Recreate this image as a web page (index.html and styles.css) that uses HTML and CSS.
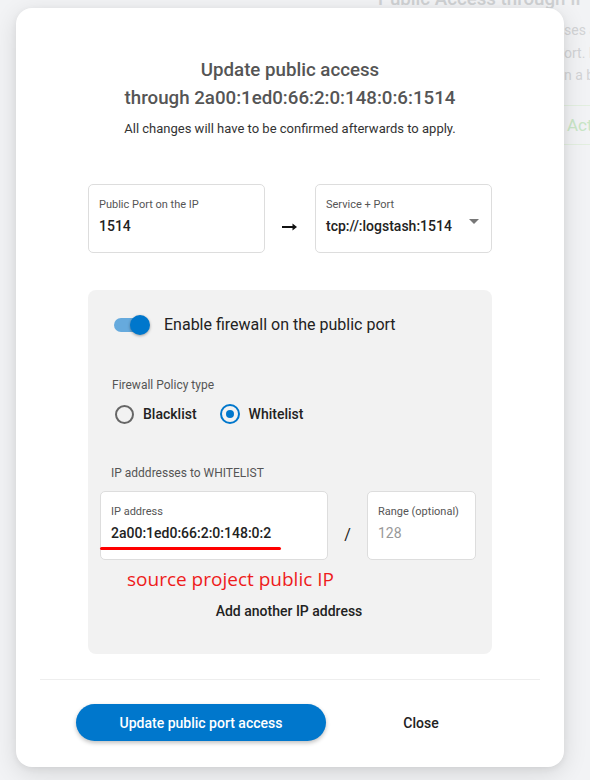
FILE: index.html
```html
<!DOCTYPE html>
<html>
<head>
<meta charset="utf-8">
<link rel="stylesheet" href="styles.css">
</head>
<body>
<div class="page">
  <h2 class="bg-title">Public Access through IP</h2>
  <p class="bg-line"><span class="bg-hidden">Only the IP addres</span>ses are allowed</p>
  <p class="bg-line"><span class="bg-hidden">to the public p</span>ort. Each</p>
  <p class="bg-line"><span class="bg-hidden">running withi</span>n a business</p>
  <div class="bg-box"><span class="bg-hidden-s">x</span>Active</div>
</div>

<div class="modal">
  <div class="modal-body">
    <h1 class="title">Update public access<br>through 2a00:1ed0:66:2:0:148:0:6:1514</h1>
    <p class="subtitle">All changes will have to be confirmed afterwards to apply.</p>

    <div class="port-row">
      <div class="field">
        <div class="field-label">Public Port on the IP</div>
        <div class="field-value">1514</div>
      </div>
      <div class="arrow">
        <svg width="16" height="10" viewBox="0 0 16 10"><path d="M0 5H13" stroke="#111" stroke-width="2"/><path d="M10.5 1.5L15 5L10.5 8.5Z" fill="#111"/></svg>
      </div>
      <div class="field field-select">
        <div class="field-label">Service + Port</div>
        <div class="field-value">tcp://:logstash:1514</div>
        <span class="caret"></span>
      </div>
    </div>

    <div class="panel">
      <div class="toggle-row">
        <span class="toggle"><span class="track"></span><span class="thumb"></span></span>
        <span class="toggle-label">Enable firewall on the public port</span>
      </div>

      <div class="section-label policy-label">Firewall Policy type</div>
      <div class="radio-row">
        <span class="radio"><span class="radio-circle"></span><span class="radio-text">Blacklist</span></span>
        <span class="radio radio-on"><span class="radio-circle"></span><span class="radio-text">Whitelist</span></span>
      </div>

      <div class="section-label ip-label">IP adddresses to WHITELIST</div>
      <div class="ip-row">
        <div class="field ip-field">
          <div class="field-label">IP address</div>
          <div class="field-value">2a00:1ed0:66:2:0:148:0:2</div>
          <span class="annot-line"></span>
        </div>
        <div class="slash">/</div>
        <div class="field range-field">
          <div class="field-label">Range (optional)</div>
          <div class="field-value placeholder">128</div>
        </div>
      </div>
      <div class="annot-text">source project public IP</div>
      <div class="add-ip">Add another IP address</div>
    </div>
  </div>

  <div class="modal-footer">
    <button class="btn-primary">Update public port access</button>
    <button class="btn-text">Close</button>
  </div>
</div>
</body>
</html>
```

FILE: styles.css
```css
* { box-sizing: border-box; }

html, body {
  margin: 0;
  padding: 0;
  width: 590px;
  height: 780px;
  overflow: hidden;
}

body {
  background: #f2f3f5;
  font-family: Roboto, "Liberation Sans", sans-serif;
  position: relative;
}

/* background page (under the modal) */
.page {
  padding-left: 378px;
  color: #d2d4d6;
}
.bg-title {
  margin: -14px 0 0;
  font-size: 18.7px;
  font-weight: 500;
  line-height: 26px;
  white-space: nowrap;
  color: #cfd1d3;
}
.bg-line {
  margin: 0;
  font-size: 14px;
  line-height: 22.5px;
  white-space: nowrap;
}
.bg-line:first-of-type { margin-top: 7px; }
.bg-hidden {
  display: inline-block;
  width: 186px;
  overflow: hidden;
  vertical-align: top;
  color: transparent;
}
.bg-box {
  margin-top: 18px;
  width: 300px;
  height: 40px;
  border: 1px solid #e3efe0;
  border-radius: 4px;
  display: flex;
  align-items: center;
  font-size: 17px;
  color: #c9e6c6;
  white-space: nowrap;
}
.bg-hidden-s {
  display: inline-block;
  width: 188px;
  color: transparent;
}

/* modal */
.modal {
  position: absolute;
  top: 8px;
  left: 16px;
  width: 548px;
  height: 759px;
  background: #fff;
  border-radius: 16px;
  box-shadow: 0 6px 24px rgba(0, 0, 0, 0.12), 0 2px 6px rgba(0, 0, 0, 0.06);
  display: flex;
  flex-direction: column;
}

.modal-body {
  padding: 48px 72px 0;
}

.title {
  margin: 0;
  text-align: center;
  font-size: 18.7px;
  font-weight: 500;
  line-height: 28px;
  color: #555;
}

.subtitle {
  margin: 7px 0 0;
  text-align: center;
  font-size: 13px;
  line-height: 20px;
  color: #333;
}

.port-row {
  margin-top: 45px;
  display: flex;
  align-items: stretch;
}

.field {
  position: relative;
  background: #fff;
  border: 1px solid #ddd;
  border-radius: 5px;
  height: 69px;
  padding: 12px 10px 0;
}
.port-row .field { width: 177px; }

.field-label {
  font-size: 11px;
  line-height: 16px;
  color: #555;
}
.field-value {
  margin-top: 2px;
  font-size: 14px;
  font-weight: 500;
  line-height: 22px;
  color: #222;
}
.placeholder { color: #999; font-weight: 400; }

.arrow {
  flex: 1;
  display: flex;
  align-items: center;
  justify-content: center;
  padding-top: 16px;
}

.caret {
  position: absolute;
  right: 12px;
  top: 34px;
  width: 0;
  height: 0;
  border-left: 5px solid transparent;
  border-right: 5px solid transparent;
  border-top: 5px solid #777;
}

/* panel */
.panel {
  margin-top: 37px;
  height: 364px;
  background: #f2f2f2;
  border-radius: 8px;
  padding: 25px 16px 0 12px;
}

.toggle-row {
  display: flex;
  align-items: center;
  padding-left: 14px;
  height: 20px;
}
.toggle {
  position: relative;
  width: 36px;
  height: 20px;
  flex-shrink: 0;
}
.track {
  position: absolute;
  left: 0;
  top: 3px;
  width: 32px;
  height: 14px;
  border-radius: 7px;
  background: #66aadd;
}
.thumb {
  position: absolute;
  left: 16px;
  top: 0;
  width: 20px;
  height: 20px;
  border-radius: 50%;
  background: #0077cc;
  box-shadow: 0 1px 3px rgba(0, 0, 0, 0.35);
}
.toggle-label {
  margin-left: 14px;
  font-size: 16px;
  line-height: 22px;
  color: #222;
}

.section-label {
  padding-left: 12px;
  font-size: 12px;
  line-height: 16px;
  color: #555;
}
.policy-label { margin-top: 42px; }

.radio-row {
  margin-top: 11px;
  display: flex;
  gap: 23px;
  padding-left: 15px;
  height: 20px;
  align-items: center;
}
.radio {
  display: flex;
  align-items: center;
}
.radio-circle {
  width: 19px;
  height: 19px;
  border-radius: 50%;
  border: 2px solid #666;
  position: relative;
  flex-shrink: 0;
}
.radio-on .radio-circle { border-color: #0077cc; width: 20px; height: 20px; }
.radio-on .radio-circle::after {
  content: "";
  position: absolute;
  left: 4px;
  top: 4px;
  width: 8px;
  height: 8px;
  border-radius: 50%;
  background: #0077cc;
}
.radio-text {
  margin-left: 9px;
  font-size: 14px;
  font-weight: 500;
  color: #222;
}

.ip-label { margin-top: 41px; padding-left: 11px; }

.ip-row {
  margin-top: 10px;
  display: flex;
}
.ip-field { width: 228px; }
.range-field { width: 109px; }
.slash {
  width: 39px;
  display: flex;
  align-items: center;
  justify-content: center;
  padding-top: 18px;
  font-size: 16px;
  color: #222;
}

.annot-line {
  position: absolute;
  left: -1px;
  top: 55px;
  width: 181px;
  height: 2.5px;
  background: #f00;
  border-radius: 2px;
}

.annot-text {
  margin-top: 6px;
  padding-left: 27px;
  font-family: "Open Sans", "DejaVu Sans", sans-serif;
  font-size: 19px;
  line-height: 26px;
  color: #ee1c1c;
}

.add-ip {
  margin-top: 11px;
  text-align: center;
  font-size: 14px;
  font-weight: 500;
  color: #222;
  padding-left: 2px;
}

/* footer */
.modal-footer {
  margin: 25px 24px 0;
  border-top: 1px solid #eee;
  padding-top: 24px;
  display: flex;
  align-items: center;
}
.btn-primary {
  margin-left: 36px;
  width: 250px;
  height: 37px;
  border: none;
  border-radius: 19px;
  background: #0077cc;
  color: #fff;
  font-family: Roboto, "Liberation Sans", sans-serif;
  font-size: 14px;
  font-weight: 500;
  box-shadow: 0 2px 4px rgba(0, 0, 0, 0.25);
}
.btn-text {
  width: 190px;
  height: 37px;
  border: none;
  background: transparent;
  color: #222;
  font-family: Roboto, "Liberation Sans", sans-serif;
  font-size: 14px;
  font-weight: 500;
}
```
